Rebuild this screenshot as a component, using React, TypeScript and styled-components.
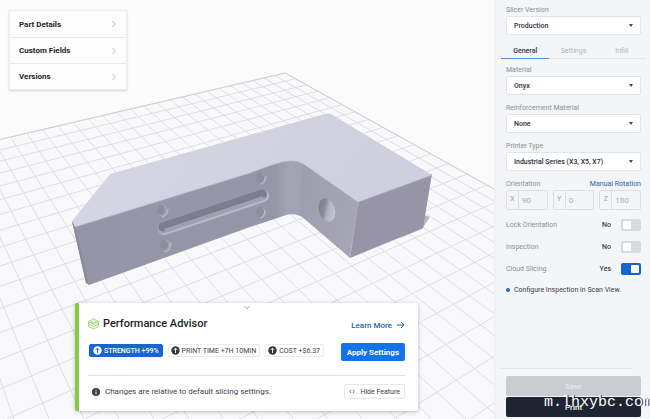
import React, { useState } from "react";
import styled, { createGlobalStyle } from "styled-components";

const GlobalStyle = createGlobalStyle`
  * { box-sizing: border-box; }
  html, body { margin: 0; padding: 0; }
  body, button, input, select { font-family: Roboto, "Liberation Sans", sans-serif; }
`;

const Page = styled.div`
  display: flex;
  height: 100vh;
  overflow: hidden;
  background: #fbfbfc;
  color: #23262b;
`;

const Viewport = styled.main`
  position: relative;
  flex: 1;
  min-width: 0;
  overflow: hidden;
  border-right: 2px solid #f1f2f4;
`;

const Scene = styled.svg`
  display: block;
  width: 100%;
  height: 100%;
`;

/* Build-plate geometry: both families of lines run to a vanishing point. */
const CORNER = [285, 73];
const VP_A = [1344, -174];
const VP_B = [-200, -196];
const STEP_A = 0.0098;
const STEP_B = 0.021;

const project = (u: number, v: number) => {
  const a = u * STEP_A;
  const b = v * STEP_B;
  const w = 1 - a - b;
  return [0, 1]
    .map((i) => ((CORNER[i] - a * VP_A[i] - b * VP_B[i]) / w).toFixed(1))
    .join(" ");
};

const range = (n: number) => Array.from({ length: n }, (_, i) => i);
const ROWS = 36;
const COLS = 60;
const limit = (value: number, step: number) => (0.92 - value) / step;

const gridPath = [
  ...range(ROWS).map((v) => `M${project(0, v)}L${project(limit(v * STEP_B, STEP_A), v)}`),
  ...range(COLS).map((u) => `M${project(u, 0)}L${project(u, limit(u * STEP_A, STEP_B))}`),
].join("");
const platePath = `M${project(0, 0)}L${project(50, 0)}L0 900L900 900L${project(0, 32)}Z`;
const edgePath = `M${project(50, 0)}L${project(0, 0)}L${project(0, 32)}`;

const PartScene = () => (
  <Scene viewBox="0 0 494 419" preserveAspectRatio="xMinYMin slice" role="img" aria-label="Part on build plate">
    <defs>
      <linearGradient id="top" x1="0" y1="0.4" x2="1" y2="0.6">
        <stop offset="0" stopColor="#d5d5e3" />
        <stop offset="1" stopColor="#cfcede" />
      </linearGradient>
      <linearGradient id="front" x1="0" y1="0" x2="1" y2="0">
        <stop offset="0" stopColor="#9694a7" />
        <stop offset="0.87" stopColor="#9796a9" />
        <stop offset="0.93" stopColor="#a5a4b5" />
        <stop offset="1" stopColor="#a09fb0" />
      </linearGradient>
      <linearGradient id="inner" x1="0" y1="0" x2="1" y2="0.5">
        <stop offset="0" stopColor="#9d9cae" />
        <stop offset="1" stopColor="#a6a5b6" />
      </linearGradient>
      <linearGradient id="bore" x1="0" y1="0" x2="1" y2="0.8">
        <stop offset="0" stopColor="#77758a" />
        <stop offset="0.42" stopColor="#8b899d" />
        <stop offset="0.6" stopColor="#b4b3c3" />
        <stop offset="1" stopColor="#cbcad8" />
      </linearGradient>
    </defs>
    <path d={platePath} fill="#f9f9fb" />
    <path d={gridPath} fill="none" stroke="#dadbde" strokeWidth="0.9" />
    <path d={edgePath} fill="none" stroke="#cfd0d2" />
    <path d="M422 214L430 217L422 229L400 238Z" fill="#b9b9c4" />
    <path d="M75 226L250 172Q280 160 292 160Q299 160 306 166V219Q297 213 288 214.500L250 227L89 285L86 283L72 221Z" fill="url(#front)" />
    <path d="M303 162L358 202L350 258L300 215Z" fill="url(#inner)" />
    <path d="M357 202L432 174L423 228L350 258Z" fill="#9694a6" />
    <path d="M72 221L110 174L325 114Q328 113 331 114L432 175L358 202L305 165Q298 160 288 161Q276 163 250 173L75 227Z" fill="url(#top)" />
    <path d="M72 221L75 227L89 284L86 283Z" fill="#8c8a9e" />
    <path d="M75 227L250 173Q280 161 290 161Q298 160 305 165L358 202L432 175M358 202L350 257" fill="none" stroke="#b9b8c8" strokeWidth="0.8" />
    <g fill="none" strokeLinecap="round">
      <path d="M164 229L263 196" stroke="#bcbbca" strokeWidth="12" />
      <path d="M163 228L262 195" stroke="#a3a2b3" strokeWidth="11" />
      <path d="M163 227L262 194" stroke="#7d7b8f" strokeWidth="9" />
      <path d="M166 230L262 198" stroke="#a09fb0" strokeWidth="3" />
    </g>
    <g fill="#a5a4b4">
      <ellipse cx="163" cy="211" rx="5" ry="6" />
      <ellipse cx="166" cy="246" rx="5" ry="6" />
      <ellipse cx="262" cy="179" rx="4" ry="5" />
      <ellipse cx="262" cy="213" rx="4" ry="5" />
    </g>
    <g fill="#8e8c9f">
      <ellipse cx="161" cy="210" rx="4" ry="5" />
      <ellipse cx="164" cy="245" rx="4" ry="5" />
      <ellipse cx="260" cy="178" rx="4" ry="5" />
      <ellipse cx="260" cy="212" rx="4" ry="5" />
    </g>
    <g fill="none" stroke="#c2c1cf" strokeLinecap="round">
      <path d="M168 209Q168 216 162 217M171 243Q171 251 165 252M266 177Q265 183 261 184M265 210Q265 216 261 218" />
    </g>
    <ellipse cx="327" cy="210" rx="8" ry="12" transform="rotate(-16 327 210)" fill="url(#bore)" />
  </Scene>
);

const InfoPanel = styled.nav`
  position: absolute;
  top: 10px;
  left: 9px;
  width: 118px;
  background: #fdfdfd;
  border: 1px solid #ececee;
  box-shadow: 0 1px 2px rgba(0, 0, 0, 0.16);
`;

const InfoRow = styled.button`
  display: flex;
  align-items: center;
  justify-content: space-between;
  width: 100%;
  height: 26px;
  padding: 0 10px 0 9px;
  border: 0;
  background: none;
  color: #23262b;
  font-size: 8px;
  font-weight: 700;
  & + & { border-top: 1px solid #e8e8ea; }
`;

const Advisor = styled.section`
  position: absolute;
  left: 75px;
  bottom: 8px;
  width: 343px;
  padding: 0 13px 12px 9px;
  border-left: 4px solid #84ca45;
  border-radius: 2px;
  background: #fff;
  box-shadow: 0 1px 4px rgba(0, 0, 0, 0.24);
`;

const Collapse = styled.button`
  display: flex;
  justify-content: center;
  width: 100%;
  height: 10px;
  padding: 2px 0 0;
  border: 0;
  background: none;
`;

const SplitRow = styled.div`
  display: flex;
  align-items: center;
  justify-content: space-between;
`;

const TitleRow = styled(SplitRow)`
  height: 22px;
`;

const Title = styled.h2`
  display: flex;
  align-items: center;
  gap: 4px;
  margin: 0;
  font-size: 11px;
  line-height: 14px;
  font-weight: 500;
  color: #1d1f23;
`;

const LearnMore = styled.a`
  display: flex;
  align-items: center;
  gap: 5px;
  padding-top: 2px;
  font-size: 8px;
  font-weight: 500;
  color: #1f62ad;
  text-decoration: none;
`;

const ChipRow = styled(SplitRow)`
  align-items: flex-start;
  height: 32px;
  margin-top: 8px;
`;

const Chips = styled.ul`
  display: flex;
  gap: 5px;
  margin: 0;
  padding: 1px 0 0 1px;
  list-style: none;
`;

const Chip = styled.li<{ $active?: boolean }>`
  display: flex;
  align-items: center;
  gap: 2px;
  height: 13px;
  padding: 0 3px 0 ${(p) => (p.$active ? 3 : 2)}px;
  border: 1px solid ${(p) => (p.$active ? "#1765cf" : "#ebecee")};
  border-radius: 2px;
  background: ${(p) => (p.$active ? "#1765cf" : "#fff")};
  color: ${(p) => (p.$active ? "#fff" : "#3a3e44")};
  font-size: 7px;
  font-weight: ${(p) => (p.$active ? 500 : 400)};
  white-space: nowrap;
`;

const ApplyButton = styled.button`
  height: 18px;
  padding: 0 6px;
  border: 0;
  border-radius: 2px;
  background: #1273eb;
  color: #fff;
  font-size: 8px;
  font-weight: 700;
  white-space: nowrap;
`;

const FooterRow = styled(SplitRow)`
  padding-top: 8px;
  border-top: 1px solid #dfe0e2;
`;

const Note = styled.p`
  display: flex;
  align-items: center;
  gap: 5px;
  margin: 0;
  padding-left: 4px;
  font-size: 8px;
  color: #3e4248;
`;

const HideButton = styled.button`
  display: flex;
  align-items: center;
  gap: 5px;
  height: 15px;
  padding: 0 4px;
  border: 1px solid #e6e7e9;
  border-radius: 2px;
  background: #fff;
  color: #3a3e44;
  font-size: 7px;
  font-weight: 400;
  white-space: nowrap;
`;

const Sidebar = styled.aside`
  position: relative;
  display: flex;
  flex-direction: column;
  flex: 0 0 154px;
  min-width: 0;
  overflow: hidden;
  padding: 5px 9px 2px 10px;
  background: #f3f5f8;
`;

const Field = styled.div`
  display: flex;
  flex-direction: column;
  gap: 1px;
  margin-bottom: 8px;
`;

const Label = styled.label`
  font-size: 7px;
  line-height: 10px;
  color: #8d9095;
`;

const SelectBox = styled.div`
  display: grid;
  align-items: center;
  & > * { grid-area: 1 / 1; }
  svg { justify-self: end; margin-right: 8px; pointer-events: none; }
`;

const SelectInput = styled.select`
  appearance: none;
  width: 100%;
  height: 19px;
  padding: 0 16px 0 7px;
  border: 1px solid #e2e4e8;
  border-radius: 2px;
  background: #fff;
  color: #2d3035;
  font-size: 7px;
  font-weight: 500;
`;

const Tabs = styled.div`
  display: grid;
  grid-template-columns: repeat(3, 1fr);
  margin: 0 -5px 6px;
`;

const Tab = styled.button<{ $active: boolean }>`
  height: 16px;
  padding: 0;
  border: 0;
  border-bottom: 1px solid ${(p) => (p.$active ? "#5591d3" : "#e3e5e9")};
  background: none;
  color: ${(p) => (p.$active ? "#33373c" : "#b2b5b9")};
  font-size: 7px;
  font-weight: ${(p) => (p.$active ? 500 : 400)};
`;

const RotationLink = styled.a`
  font-size: 7px;
  line-height: 10px;
  color: #2765b4;
  text-decoration: none;
`;

const Axes = styled.div`
  display: grid;
  grid-template-columns: repeat(3, minmax(0, 1fr));
  gap: 5px;
  margin: 1px 0 4px;
`;

const Axis = styled.label`
  display: flex;
  height: 20px;
  border: 1px solid #dddfe3;
  border-radius: 2px;
  color: #a0a3a8;
  font-size: 7px;
  line-height: 17px;
  span { flex: 0 0 12px; text-align: center; border-right: 1px solid #dddfe3; }
`;

const AxisInput = styled.input`
  flex: 1;
  width: 0;
  min-width: 0;
  padding: 0 0 0 3px;
  border: 0;
  background: none;
  color: #aaadb1;
  font-size: 8px;
`;

const ToggleRow = styled.label`
  display: flex;
  align-items: center;
  height: 22px;
  font-size: 7px;
  color: #8d9095;
`;

const ToggleValue = styled.span`
  margin-left: auto;
  margin-right: 10px;
  color: #3c3f44;
  font-weight: 500;
`;

const Switch = styled.input`
  appearance: none;
  display: flex;
  width: 20px;
  height: 12px;
  margin: 0;
  padding: 2px;
  border-radius: 2px;
  background: #d9dadc;
  &::before { content: ""; width: 8px; border-radius: 1px; background: #fff; }
  &:checked { background: #1265d2; justify-content: flex-end; }
`;

const Hint = styled.p`
  display: flex;
  align-items: center;
  gap: 4px;
  margin: 4px 0 0;
  font-size: 7px;
  line-height: 12px;
  color: #3c3f44;
  white-space: nowrap;
  &::before { content: ""; width: 4px; height: 4px; border-radius: 50%; background: #2468c4; }
`;

const Actions = styled.div`
  display: grid;
  gap: 1px;
  margin-top: auto;
  &::before { content: ""; height: 1px; margin: 0 9px 6px -6px; background: #e6e8ec; }
`;

const ActionButton = styled.button<{ $primary?: boolean }>`
  height: 20px;
  border: 0;
  border-radius: 2px;
  background: ${(p) => (p.$primary ? "#1e2431" : "#c9ccd1")};
  color: ${(p) => (p.$primary ? "#fff" : "#e8eaec")};
  font-size: 8px;
  font-weight: 500;
`;

const Watermark = styled.div`
  position: absolute;
  left: 48px;
  bottom: 8px;
  color: #fff;
  font-family: "Liberation Mono", monospace;
  font-size: 15px;
  line-height: 17px;
  white-space: nowrap;
  text-shadow: 1px 0 0 #1e2431;
  pointer-events: none;
`;

const ChevronRight = () => (
  <svg width="4" height="8" viewBox="0 0 4 8" fill="none" stroke="#b9bbbf"><path d="M0.500 1L3.500 4L0.500 7" /></svg>
);

const Caret = () => (
  <svg width="4" height="3" viewBox="0 0 4 3" fill="#44474c"><path d="M0 0H4L2 3Z" /></svg>
);

const LayersLogo = () => (
  <svg width="11" height="12" viewBox="0 0 11 12" fill="none" stroke="#8ccc55" strokeWidth="0.9" strokeLinejoin="round">
    <path d="M5.500 0.700L10.300 3.500L5.500 6.400L0.700 3.500ZM3 3.500L5.500 5L8 3.500" />
    <path d="M0.700 3.500V8.300L5.500 11.200L10.300 8.300V3.500M0.700 5.800L5.500 8.800L10.300 5.800" />
  </svg>
);

const UpBadge = ({ active = false }: { active?: boolean }) => (
  <svg width="9" height="9" viewBox="0 0 9 9">
    <circle cx="4.500" cy="4.500" r="4.200" fill={active ? "#fff" : "#33383f"} />
    <path d="M4.500 7V2.300M2.700 4L4.500 2.200L6.300 4" fill="none" stroke={active ? "#1765cf" : "#fff"} strokeWidth="0.9" />
  </svg>
);

const InfoBadge = () => (
  <svg width="8" height="8" viewBox="0 0 8 8">
    <circle cx="4" cy="4" r="4" fill="#3a3f46" />
    <path d="M4 3.500V6.200M4 1.700V2.700" stroke="#fff" />
  </svg>
);

const Arrow = () => (
  <svg width="8" height="8" viewBox="0 0 8 8" fill="none" stroke="#1f62ad"><path d="M0 4H7M4 1L7 4L4 7" /></svg>
);

const EyeIcon = () => (
  <svg width="6" height="5" viewBox="0 0 6 5" fill="none" stroke="#4b4f55" strokeWidth="0.8">
    <path d="M2.200 0.900L0.600 2.500L2.200 4.100M3.800 0.900L5.400 2.500L3.800 4.100" />
  </svg>
);

const SelectField = ({ id, label, value }: { id: string; label: string; value: string }) => (
  <Field>
    <Label htmlFor={id}>{label}</Label>
    <SelectBox>
      <SelectInput id={id} defaultValue={value}><option>{value}</option></SelectInput>
      <Caret />
    </SelectBox>
  </Field>
);

const ToggleField = ({ label, initial }: { label: string; initial: boolean }) => {
  const [on, setOn] = useState(initial);
  return (
    <ToggleRow>
      {label}
      <ToggleValue>{on ? "Yes" : "No"}</ToggleValue>
      <Switch type="checkbox" checked={on} onChange={() => setOn(!on)} />
    </ToggleRow>
  );
};

export default function App() {
  const [tab, setTab] = useState("General");
  return (
    <>
      <GlobalStyle />
      <Page>
        <Viewport>
          <PartScene />
          <InfoPanel>
            {["Part Details", "Custom Fields", "Versions"].map((name) => (
              <InfoRow key={name}>{name}<ChevronRight /></InfoRow>
            ))}
          </InfoPanel>
          <Advisor>
            <Collapse aria-label="Collapse">
              <svg width="6" height="5" viewBox="0 0 6 5" fill="none" stroke="#a9acb0"><path d="M0.500 1L3 4L5.500 1" /></svg>
            </Collapse>
            <TitleRow>
              <Title><LayersLogo />Performance Advisor</Title>
              <LearnMore href="#learn">Learn More <Arrow /></LearnMore>
            </TitleRow>
            <ChipRow>
              <Chips>
                <Chip $active><UpBadge active />STRENGTH +99%</Chip>
                <Chip><UpBadge />PRINT TIME +7H 10MIN</Chip>
                <Chip><UpBadge />COST +$6.37</Chip>
              </Chips>
              <ApplyButton>Apply Settings</ApplyButton>
            </ChipRow>
            <FooterRow>
              <Note><InfoBadge />Changes are relative to default slicing settings.</Note>
              <HideButton><EyeIcon />Hide Feature</HideButton>
            </FooterRow>
          </Advisor>
        </Viewport>
        <Sidebar>
          <SelectField id="slicer" label="Slicer Version" value="Production" />
          <Tabs role="tablist">
            {["General", "Settings", "Infill"].map((name) => (
              <Tab key={name} role="tab" aria-selected={tab === name} $active={tab === name} onClick={() => setTab(name)}>{name}</Tab>
            ))}
          </Tabs>
          <SelectField id="material" label="Material" value="Onyx" />
          <SelectField id="reinforcement" label="Reinforcement Material" value="None" />
          <SelectField id="printer" label="Printer Type" value="Industrial Series (X3, X5, X7)" />
          <SplitRow>
            <Label as="span">Orientation</Label>
            <RotationLink href="#rotation">Manual Rotation</RotationLink>
          </SplitRow>
          <Axes>
            {[["X", "90"], ["Y", "0"], ["Z", "180"]].map(([axis, value]) => (
              <Axis key={axis}><span>{axis}</span><AxisInput defaultValue={value} /></Axis>
            ))}
          </Axes>
          <ToggleField label="Lock Orientation" initial={false} />
          <ToggleField label="Inspection" initial={false} />
          <ToggleField label="Cloud Slicing" initial />
          <Hint>Configure Inspection in Scan View.</Hint>
          <Actions>
            <ActionButton>Save</ActionButton>
            <ActionButton $primary>Print</ActionButton>
          </Actions>
          <Watermark>m.lhxybc.com</Watermark>
        </Sidebar>
      </Page>
    </>
  );
}
